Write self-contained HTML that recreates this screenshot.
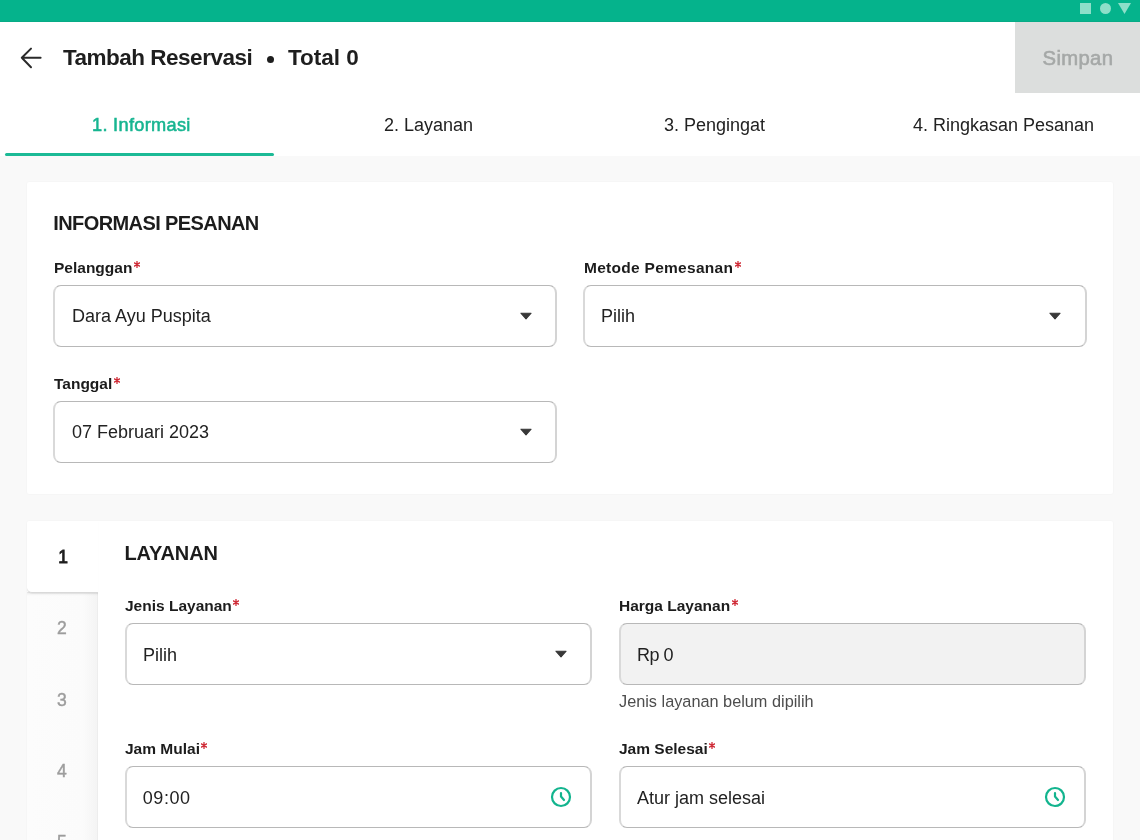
<!DOCTYPE html>
<html><head><meta charset="utf-8">
<style>
*{box-sizing:border-box;margin:0;padding:0}
html,body{width:1140px;height:840px;overflow:hidden;-webkit-font-smoothing:antialiased;background:#f9f9f9;font-family:"Liberation Sans",sans-serif;color:#1f1f1f}
.abs{position:absolute;white-space:nowrap}
#status{position:absolute;left:0;top:0;width:1140px;height:22px;background:#05b38c;border-bottom:1px solid #07ab86}
#header{position:absolute;left:0;top:22px;width:1140px;height:134px;background:#fff}
.simpan{position:absolute;left:1015px;top:22px;width:125px;height:71px;background:#dcdedd}
.tabtxt{font-size:18px;line-height:18px;color:#222}
.card{position:absolute;background:#fff;border-radius:2px;box-shadow:0 0 2px rgba(0,0,0,0.05)}
.lbl{font-size:15.5px;line-height:16px;font-weight:bold;color:#1c1c1c}
.ast{vertical-align:baseline;position:relative;top:-5.1px;margin-left:1.4px}
.inp{position:absolute;border:1px solid #b8b8b8;border-left:2px solid #d9d9d9;border-right:2px solid #d4d4d4;border-radius:8px;background:#fff;height:62px}
.val{font-size:18px;line-height:18px;color:#222}
.num{font-size:17.5px;line-height:18px;font-weight:normal;-webkit-text-stroke:0.45px currentColor;color:#9d9d9d}
</style></head><body><div id="root" style="position:absolute;left:0;top:0;width:1140px;height:840px;will-change:transform">
<div id="status"></div>
<svg class="abs" style="left:1078px;top:2px" width="56" height="14" viewBox="0 0 56 14">
  <rect x="2" y="1" width="11" height="11" fill="#8ddfc9"/>
  <circle cx="27.5" cy="6.5" r="5.5" fill="#8ddfc9"/>
  <path d="M40 1 L53 1 L46.5 12 Z" fill="#8ddfc9"/>
</svg>
<div id="header"></div>
<svg class="abs" style="left:19px;top:46px" width="24" height="24" viewBox="0 0 24 24">
  <path d="M12 2.6 L2.8 11.8 L12 21.2 M2.8 11.8 L21.6 11.8" fill="none" stroke="#2a2a2a" stroke-width="2" stroke-linecap="round" stroke-linejoin="round"/>
</svg>
<div class="abs" style="left:63px;top:45.5px;font-size:22.5px;line-height:24px;font-weight:bold;letter-spacing:-0.5px;color:#1e1e1e">Tambah Reservasi</div>
<div class="abs" style="left:267px;top:55.5px;width:7px;height:7px;border-radius:50%;background:#1e1e1e"></div>
<div class="abs" style="left:288px;top:45.5px;font-size:22.5px;line-height:24px;font-weight:bold;color:#1e1e1e">Total 0</div>
<div class="simpan"></div>
<div class="abs" style="left:1042.5px;top:48.2px;font-size:20.3px;line-height:20px;font-weight:normal;-webkit-text-stroke:0.6px currentColor;letter-spacing:0.35px;color:#a5a8a7">Simpan</div>

<div class="abs tabtxt" style="left:92px;top:116px;font-weight:normal;-webkit-text-stroke:0.55px currentColor;color:#17b591;font-size:18.2px;letter-spacing:0.3px">1. Informasi</div>
<div class="abs tabtxt" style="left:384px;top:116px">2. Layanan</div>
<div class="abs tabtxt" style="left:664px;top:116px">3. Pengingat</div>
<div class="abs tabtxt" style="left:913px;top:116px">4. Ringkasan Pesanan</div>
<div class="abs" style="left:4.5px;top:152.5px;width:269.5px;height:3px;border-radius:2px;background:#1cba96"></div>

<!-- card 1 -->
<div class="card" style="left:27px;top:182px;width:1086px;height:312px"></div>
<div class="abs" style="left:53.3px;top:213px;font-size:20px;line-height:20px;font-weight:bold;letter-spacing:-0.6px;color:#1c1c1c">INFORMASI PESANAN</div>
<div class="abs lbl" style="left:54px;top:259.8px">Pelanggan<svg class="ast" width="6" height="7" viewBox="0 0 6 7"><path d="M3 0.4V6.6M0.4 1.9L5.6 5.1M5.6 1.9L0.4 5.1" stroke="#cf2a36" stroke-width="1.3" stroke-linecap="round"/></svg></div>
<div class="abs lbl" style="left:584px;top:259.8px;letter-spacing:0.28px">Metode Pemesanan<svg class="ast" width="6" height="7" viewBox="0 0 6 7"><path d="M3 0.4V6.6M0.4 1.9L5.6 5.1M5.6 1.9L0.4 5.1" stroke="#cf2a36" stroke-width="1.3" stroke-linecap="round"/></svg></div>
<div class="inp" style="left:53px;top:285px;width:504px"></div>
<div class="abs val" style="left:72px;top:307px">Dara Ayu Puspita</div>
<svg class="abs" style="left:519.5px;top:312px" width="12" height="8" viewBox="0 0 12 8"><path d="M0.9 1.2H11.1L6 6.9Z" fill="#383838" stroke="#383838" stroke-width="1.1" stroke-linejoin="round"/></svg>
<div class="inp" style="left:583px;top:285px;width:504px"></div>
<div class="abs val" style="left:601px;top:307px">Pilih</div>
<svg class="abs" style="left:1049.4px;top:312px" width="12" height="8" viewBox="0 0 12 8"><path d="M0.9 1.2H11.1L6 6.9Z" fill="#383838" stroke="#383838" stroke-width="1.1" stroke-linejoin="round"/></svg>
<div class="abs lbl" style="left:54px;top:375.8px">Tanggal<svg class="ast" width="6" height="7" viewBox="0 0 6 7"><path d="M3 0.4V6.6M0.4 1.9L5.6 5.1M5.6 1.9L0.4 5.1" stroke="#cf2a36" stroke-width="1.3" stroke-linecap="round"/></svg></div>
<div class="inp" style="left:53px;top:401px;width:504px"></div>
<div class="abs val" style="left:72px;top:423px">07 Februari 2023</div>
<svg class="abs" style="left:519.5px;top:428px" width="12" height="8" viewBox="0 0 12 8"><path d="M0.9 1.2H11.1L6 6.9Z" fill="#383838" stroke="#383838" stroke-width="1.1" stroke-linejoin="round"/></svg>

<!-- card 2 -->
<div class="card" style="left:27px;top:521px;width:1086px;height:340px"></div>
<div class="abs" style="left:27px;top:584px;width:71px;height:270px;background:linear-gradient(90deg,#fcfcfc 0,#fbfbfb 80%,#f4f4f4 100%);border-right:1px solid #ededed"></div>
<div class="abs" style="left:27px;top:592px;width:71px;height:4px;background:linear-gradient(rgba(0,0,0,0.11),rgba(0,0,0,0.04) 40%,rgba(0,0,0,0))"></div>
<div class="abs" style="left:27px;top:521px;width:71px;height:71.5px;background:#fff;border-radius:3px 0 0 5px;border-bottom:1px solid #d9d9d9;box-shadow:0 1px 1px rgba(0,0,0,0.06)"></div>
<div class="abs num" style="left:58.3px;top:548px;color:#1e1e1e;-webkit-text-stroke:0.8px #1e1e1e">1</div>
<div class="abs num" style="left:57px;top:619px">2</div>
<div class="abs num" style="left:57px;top:690.5px">3</div>
<div class="abs num" style="left:57px;top:762px">4</div>
<div class="abs num" style="left:57px;top:833px">5</div>

<div class="abs" style="left:124.5px;top:543px;font-size:20px;line-height:20px;font-weight:bold;letter-spacing:-0.1px;color:#1c1c1c">LAYANAN</div>
<div class="abs lbl" style="left:125px;top:597.8px">Jenis Layanan<svg class="ast" width="6" height="7" viewBox="0 0 6 7"><path d="M3 0.4V6.6M0.4 1.9L5.6 5.1M5.6 1.9L0.4 5.1" stroke="#cf2a36" stroke-width="1.3" stroke-linecap="round"/></svg></div>
<div class="abs lbl" style="left:619px;top:597.8px">Harga Layanan<svg class="ast" width="6" height="7" viewBox="0 0 6 7"><path d="M3 0.4V6.6M0.4 1.9L5.6 5.1M5.6 1.9L0.4 5.1" stroke="#cf2a36" stroke-width="1.3" stroke-linecap="round"/></svg></div>
<div class="inp" style="left:125px;top:623px;width:467px"></div>
<div class="abs val" style="left:143px;top:646px">Pilih</div>
<svg class="abs" style="left:555.3px;top:650px" width="12" height="8" viewBox="0 0 12 8"><path d="M0.9 1.2H11.1L6 6.9Z" fill="#383838" stroke="#383838" stroke-width="1.1" stroke-linejoin="round"/></svg>
<div class="inp" style="left:619px;top:623px;width:467px;background:#f2f2f2"></div>
<div class="abs val" style="left:637px;top:646px;letter-spacing:-0.5px">Rp 0</div>
<div class="abs" style="left:619px;top:693px;font-size:16.3px;line-height:16px;color:#4d4d4d">Jenis layanan belum dipilih</div>
<div class="abs lbl" style="left:125px;top:740.8px">Jam Mulai<svg class="ast" width="6" height="7" viewBox="0 0 6 7"><path d="M3 0.4V6.6M0.4 1.9L5.6 5.1M5.6 1.9L0.4 5.1" stroke="#cf2a36" stroke-width="1.3" stroke-linecap="round"/></svg></div>
<div class="abs lbl" style="left:619px;top:740.8px">Jam Selesai<svg class="ast" width="6" height="7" viewBox="0 0 6 7"><path d="M3 0.4V6.6M0.4 1.9L5.6 5.1M5.6 1.9L0.4 5.1" stroke="#cf2a36" stroke-width="1.3" stroke-linecap="round"/></svg></div>
<div class="inp" style="left:125px;top:766px;width:467px"></div>
<div class="abs val" style="left:142.7px;top:789px;letter-spacing:0.6px">09:00</div>
<svg class="abs" style="left:549px;top:785px" width="24" height="24" viewBox="0 0 24 24">
  <circle cx="12" cy="12" r="9" fill="none" stroke="#12b48e" stroke-width="2.2"/>
  <path d="M12 8 L12 11.5 L15 15" fill="none" stroke="#12b48e" stroke-width="2.2" stroke-linecap="round" stroke-linejoin="round"/>
</svg>
<div class="inp" style="left:619px;top:766px;width:467px"></div>
<div class="abs val" style="left:637px;top:789px">Atur jam selesai</div>
<svg class="abs" style="left:1043px;top:785px" width="24" height="24" viewBox="0 0 24 24">
  <circle cx="12" cy="12" r="9" fill="none" stroke="#12b48e" stroke-width="2.2"/>
  <path d="M12 8 L12 11.5 L15 15" fill="none" stroke="#12b48e" stroke-width="2.2" stroke-linecap="round" stroke-linejoin="round"/>
</svg>
</div></body></html>
